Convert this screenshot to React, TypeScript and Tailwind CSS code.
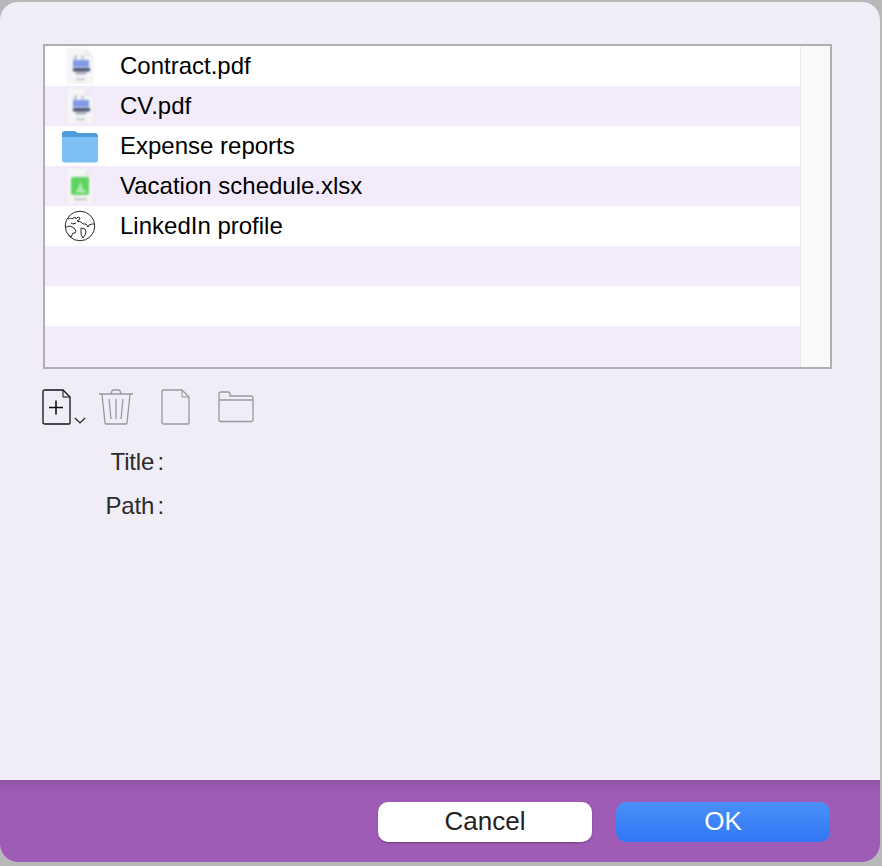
import React from "react";

const PdfIcon = () => (
  <svg width="28" height="36" viewBox="0 0 28 36" className="blur-[0.8px]">
    <path d="M1.500 1h18l7 7v27h-25z" fill="#f6f6f8" stroke="#f0f0f3" />
    <path d="M19.500 1l7 7h-7z" fill="#e8e8eb" />
    <rect x="8" y="7" width="3" height="6" fill="#c6cad6" />
    <rect x="15" y="7" width="3" height="6" fill="#d0d3dc" />
    <rect x="7" y="12" width="16" height="7" fill="#7d9be6" />
    <rect x="6" y="19" width="18" height="1" fill="#e4e8f2" />
    <rect x="7" y="20" width="17" height="3.500" fill="#46506a" />
    <rect x="10" y="23.500" width="10" height="3" fill="#a6acba" />
    <rect x="10" y="30" width="9" height="2.500" fill="#cfcfd3" />
  </svg>
);

const XlsIcon = () => (
  <svg width="28" height="36" viewBox="0 0 28 36" className="blur-[0.8px]">
    <path d="M1.500 1h18l7 7v27h-25z" fill="#f5f5f6" stroke="#f0f0f2" />
    <path d="M19.500 1l7 7h-7z" fill="#e8e8ea" />
    <rect x="5" y="9" width="18" height="18" rx="2" fill="#5fd35f" />
    <path d="M8 24c3-1 5-3 6-10 2 1 2 3 2 6l4 3v2z" fill="#b4ecb0" />
    <rect x="8" y="30" width="13" height="2.500" fill="#c9cbc9" />
  </svg>
);

const FolderIcon = () => (
  <svg width="38" height="34" viewBox="0 0 38 34" className="blur-[0.3px]">
    <path d="M1 5a3 3 0 0 1 3-3h9c2 0 3 2 5 2h16a3 3 0 0 1 3 3v4H1z" fill="#4d9ddc" />
    <path d="M1 8h36v23a2.500 2.500 0 0 1-2.500 2.500h-31A2.500 2.500 0 0 1 1 31z" fill="#7cc0f5" />
  </svg>
);

const GlobeIcon = () => (
  <svg width="32" height="32" viewBox="0 0 32 32" fill="none" stroke="#2a2a2a" strokeWidth="1" strokeLinejoin="round">
    <circle cx="16" cy="16" r="14.800" />
    <path d="M4 9c2-1 3-1 4 0l3-2 1 2 2-2 2 1-1 2-2 1 4 1 2 2 3 0 2 3 1-2 3-1 2 0" />
    <path d="M2 17l4-1 4 2 2 3-1 2-2 0-2 4-2-2" />
    <path d="M17 18l4 1 1 3-1 3-2 3-2-4z" />
    <path d="M7 13l2 1 3-1" />
  </svg>
);

const AddIcon = () => (
  <svg width="30" height="36" viewBox="0 0 30 36" fill="none" stroke="#111" strokeWidth="1.300">
    <path d="M3 1h18l7 7v26a1 1 0 0 1-1 1H3a2 1 0 0 1-2-1V2.500A1.500 1.500 0 0 1 3 1z" />
    <path d="M21 1v7h7" strokeWidth="1" />
    <path d="M7 18.500h14M14 11.500v14" strokeWidth="1.600" />
  </svg>
);

const Chevron = () => (
  <svg width="12" height="7" viewBox="0 0 12 7" fill="none" stroke="#222" strokeWidth="1.200">
    <path d="M1 1l5 5 5-5" />
  </svg>
);

const TrashIcon = () => (
  <svg width="36" height="36" viewBox="0 0 36 36" fill="none" stroke="#9a999d" strokeWidth="1.300">
    <path d="M1 5h34M13 5l1-3a1 1 0 0 1 1-1h6a1 1 0 0 1 1 1l1 3" />
    <path d="M4 5l3 29a1 1 0 0 0 1 1h20a1 1 0 0 0 1-1l3-29" />
    <path d="M11 10l2 20M18 10v20M25 10l-2 20" />
  </svg>
);

const FileIcon = () => (
  <svg width="30" height="36" viewBox="0 0 30 36" fill="none" stroke="#9a999d" strokeWidth="1.300">
    <path d="M3 1h18l7 7v26a1 1 0 0 1-1 1H3a2 1 0 0 1-2-1V3a2 2 0 0 1 2-2z" />
    <path d="M21 1v7h7" strokeWidth="1" />
  </svg>
);

const FolderOutline = () => (
  <svg width="36" height="32" viewBox="0 0 36 32" fill="none" stroke="#9a999d" strokeWidth="1.300">
    <path d="M1 29V3a2 2 0 0 1 2-2h7a2 2 0 0 1 2 2v2h21a2 2 0 0 1 2 2v22a1.500 1.500 0 0 1-1.500 1.500h-31A1.500 1.500 0 0 1 1 29z" />
    <path d="M1 9h34" />
  </svg>
);

const rows: { name: string; icon: React.ReactNode }[] = [
  { name: "Contract.pdf", icon: <PdfIcon /> },
  { name: "CV.pdf", icon: <PdfIcon /> },
  { name: "Expense reports", icon: <FolderIcon /> },
  { name: "Vacation schedule.xlsx", icon: <XlsIcon /> },
  { name: "LinkedIn profile", icon: <GlobeIcon /> },
  { name: "", icon: null },
  { name: "", icon: null },
  { name: "", icon: null },
];

export default function App() {
  return (
    <div className="h-[866px] w-[882px] overflow-hidden bg-[#b8b8b8] pt-[2px] font-['Liberation_Sans',sans-serif]">
      <div className="flex h-[860px] w-[880px] flex-col overflow-hidden rounded-[18px] bg-[#f0edf6]">
        <div className="flex-1 pl-[43px] pt-[42px]">
          <div className="flex h-[325px] w-[789px] border-2 border-[#b0aeb4]">
            <div className="flex-1">
              {rows.map((row, i) => (
                <div
                  key={i}
                  className={`flex h-[40px] items-center ${i % 2 === 0 ? "bg-white" : "bg-[#f3ebfa]"}`}
                >
                  <div className="flex w-[75px] shrink-0 justify-center pr-[5px]">{row.icon}</div>
                  <span className="text-[24px] leading-none text-black">{row.name}</span>
                </div>
              ))}
            </div>
            <div className="w-[30px] border-l border-[#ebebeb] bg-[#f9f9f9]" />
          </div>

          <div className="-ml-[1px] mt-[20px] flex h-[36px] items-end">
            <AddIcon />
            <div className="mb-[1px] ml-[2px]">
              <Chevron />
            </div>
            <div className="ml-[12px]">
              <TrashIcon />
            </div>
            <div className="ml-[27px]">
              <FileIcon />
            </div>
            <div className="mb-[2px] ml-[27px]">
              <FolderOutline />
            </div>
          </div>

          <div className="mt-[23px] flex w-[121px] flex-col items-end gap-[17px] text-[24px] leading-[27px] tracking-[-0.2px] text-[#2c2c2e] [word-spacing:-3px]">
            <span>Title :</span>
            <span>Path :</span>
          </div>
        </div>

        <div className="flex h-[82px] items-start justify-end gap-[24px] bg-[#9e5cb7] pr-[50px] pt-[22px] shadow-[inset_0_10px_8px_-6px_rgba(80,60,90,0.22)]">
          <button className="h-[40px] w-[214px] rounded-[10px] bg-white pb-[2px] text-[26px] text-[#222] shadow-[0_1px_2px_rgba(0,0,0,0.3)]">
            Cancel
          </button>
          <button className="h-[40px] w-[214px] rounded-[10px] bg-gradient-to-b from-[#4a90f8] to-[#3076f6] pb-[2px] text-[26px] text-white">
            OK
          </button>
        </div>
      </div>
    </div>
  );
}
